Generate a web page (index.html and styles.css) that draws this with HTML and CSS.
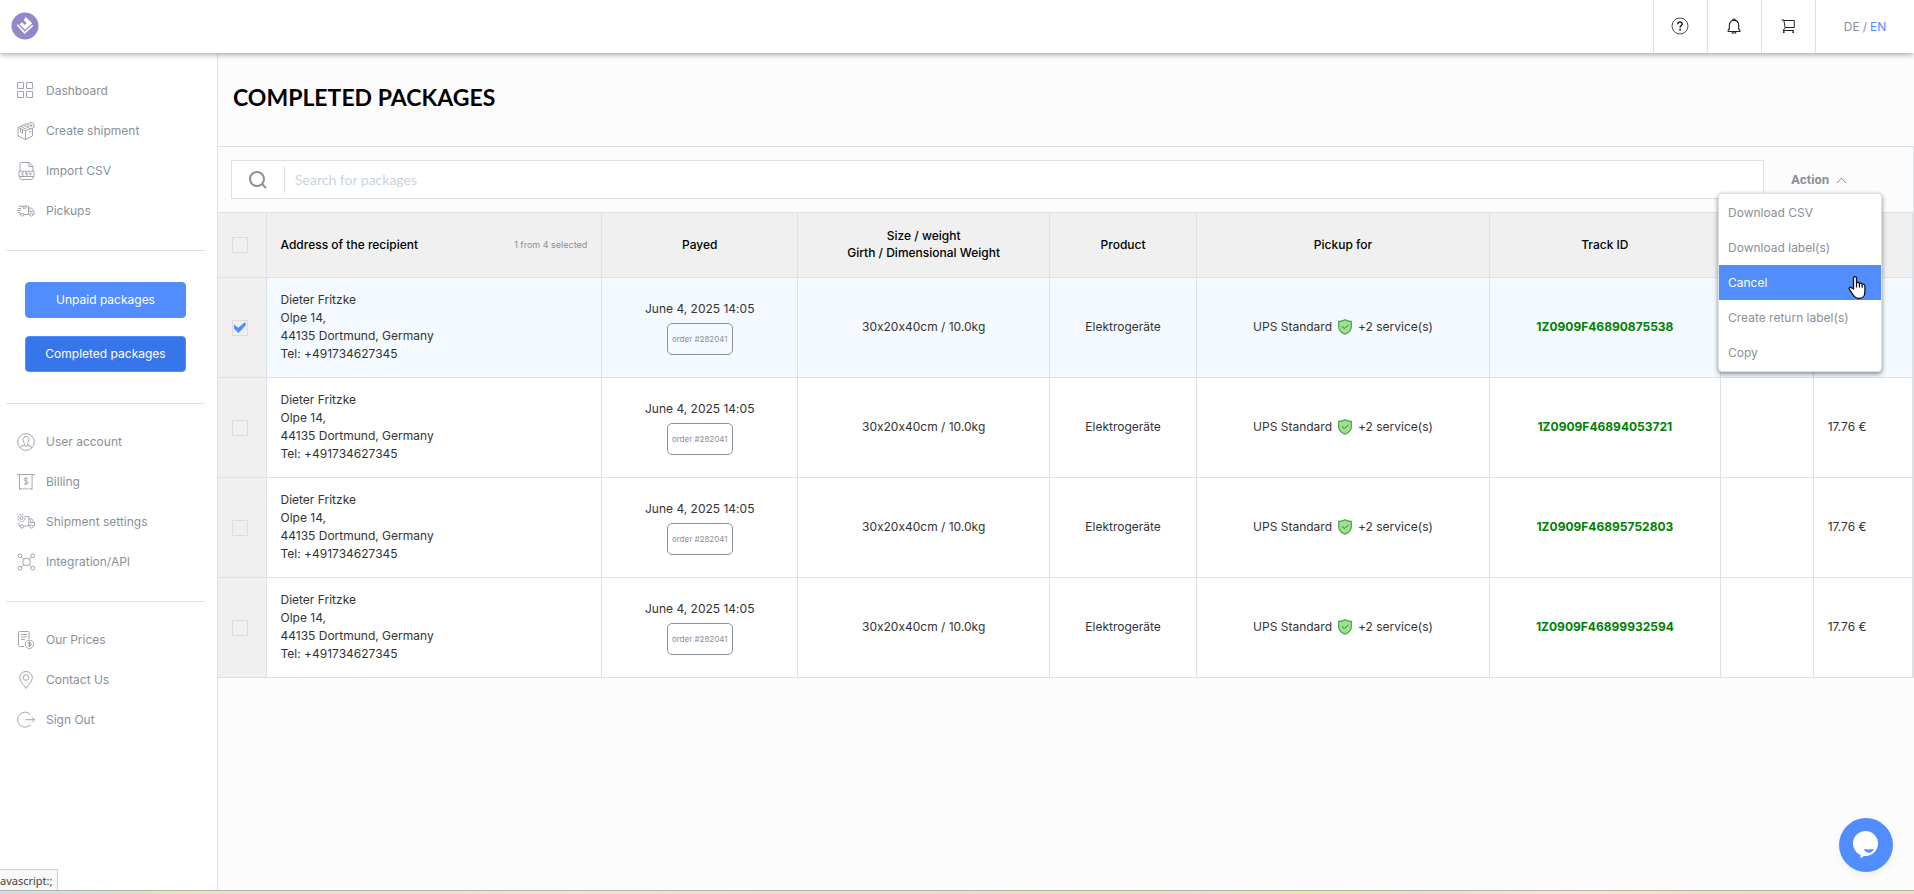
FILE: index.html
```
<!DOCTYPE html>
<html lang="en">
<head>
<meta charset="utf-8">
<meta name="viewport" content="width=device-width, initial-scale=1">
<title>Completed packages</title>
<link rel="stylesheet" href="styles.css">
</head>
<body>
<header class="topbar">
  <a class="logo" href="#" aria-label="Home">
    <svg width="28" height="28" viewBox="0 0 28 28"><circle cx="14" cy="14" r="13.5" fill="#9387c8"/><path d="M14.8 5l6.400 6.200-7.200 6.600-5.400-5.400 2.300-2.200 3 2.700 1.800-1.700-3-3.200z" fill="#fff"/><path d="M6.300 12.800l7.400 8 8-7.400" fill="none" stroke="#fff" stroke-width="1.700"/></svg>
  </a>
  <nav class="tools" aria-label="Tools">
    <button class="tool" aria-label="Help"><svg width="18" height="18" viewBox="0 0 18 18" fill="none" stroke="#222"><circle cx="9" cy="9" r="8" stroke-width=".8"/><path d="M6.900 7.200c0-2.800 4.300-2.700 4.300-.2 0 1.600-2.100 1.600-2.100 3.400" stroke-width="1.500"/><path d="M9.100 11.800v1.600" stroke-width="1.700"/></svg></button>
    <button class="tool" aria-label="Notifications"><svg width="18" height="18" viewBox="0 0 18 18" fill="none" stroke="#222" stroke-width="1.100"><path d="M4.300 12.200V8.600C4.300 5.500 6 3.400 9 3.400s4.700 2.100 4.700 5.200v3.600"/><path d="M4.300 11.800L3.200 13.300v1.200h11.600v-1.200l-1.100-1.500M8 3.300V2.200h2v1.100M7.300 14.800v1.200h3.400v-1.200"/></svg></button>
    <button class="tool" aria-label="Cart"><svg width="18" height="18" viewBox="0 0 18 18" fill="none" stroke="#222" stroke-width="1"><path d="M2.500 3h2.300l1.400 8-2.200 2.500H15M4.800 3.500h10.500v7H6.200"/><path d="M4 15.200h1.600M13.400 15.200H15" stroke-width="1.800"/></svg></button>
    <div class="lang"><a href="#">DE</a><span> / </span><a class="current" href="#">EN</a></div>
  </nav>
</header>

<div class="shell">
<aside class="sidebar">
  <nav class="menu">
    <a href="#"><svg class="ico" viewBox="0 0 18 18"><path d="M.5.5h6v6h-6zM9.500.5h6v6h-6zM.5 9.500h6v6h-6zM9.500 9.500h6v6h-6z"/></svg>Dashboard</a>
    <a href="#"><svg class="ico" viewBox="0 0 18 18"><path d="M1 5.500v8.500l7.500 3.500 7-3.500V7M8.500 8.800v8.500M1 5.500l7.500 3.300 5-2M1 5.500l8-3.500h2M4 4.500l5.500 2.800M3.500 7v3l2 1V8M6.500 3.300l4.500 2M12 10l2-.8"/><circle cx="14" cy="3.600" r="3.200"/><path d="M14 2v3.200M12.400 3.600h3.200"/></svg>Create shipment</a>
    <a href="#"><svg class="ico" viewBox="0 0 18 18"><path d="M3 9V2Q3 .5 4.500.5H12L16 4.500V9M12 .5v4h4M3 14.500v1.500q0 1.500 1.500 1.500h10q1.500 0 1.500-1.500v-1.500M2 9.200h15v5.300H2z"/><path d="M6.800 10.700H5v2.400h1.800M10.300 10.700H8.600v1h1.700v1.400H8.600M12 10.500l1.200 2.600 1.200-2.600"/></svg>Import CSV</a>
    <a href="#"><svg class="ico" viewBox="0 0 18 18"><path d="M2 4.200h9.500v8.300H7M1 6.500h3M0 8.500h4M1 10.500h2v2h.7M11.500 6h3l2.500 3v3.500h-1M11.500 12.500h1M13 7.500v2h3M6 4.200v2h3v-2"/><circle cx="5.300" cy="12.700" r="1.500"/><circle cx="14.300" cy="12.700" r="1.500"/></svg>Pickups</a>
  </nav>
  <hr>
  <div class="buttons">
    <button class="btn">Unpaid packages</button>
    <button class="btn active">Completed packages</button>
  </div>
  <hr>
  <nav class="menu">
    <a href="#"><svg class="ico" viewBox="0 0 18 18"><circle cx="9" cy="9" r="8.300"/><path d="M6 6.500C6 2.500 12 2.500 12 6.500c0 2-.8 3.200-1.500 3.800v1.500l3.500 1.500.5 1.500M7.500 11.800L4 13.300l-.5 1.500M7.500 11.800v-1.500C6.800 9.700 6 8.500 6 6.500M6.500 12.300q2.500 2 5 0"/></svg>User account</a>
    <a href="#"><svg class="ico" viewBox="0 0 18 18"><path d="M.5 2.500v-1h17v1M2.500 1.500v15l1.600-1.200 1.600 1.200 1.600-1.200 1.700 1.200 1.600-1.200 1.600 1.200 1.600-1.200 1.300 1.200v-15M11 6.200q-.5-1.200-2-1.200T7.200 6.500Q7.200 7.800 9 8t2 1.600q0 1.500-2 1.500T7 10M9 4v8"/></svg>Billing</a>
    <a href="#"><svg class="ico" viewBox="0 0 18 18"><circle cx="4.500" cy="5" r="3.600" stroke-dasharray="2 .8"/><circle cx="4.500" cy="5" r="1.600"/><path d="M8.500 3.500h3.300v9.500H7M2 9.500v3.500h1M11.800 6h3l2.700 3.500V13h-1M11.800 13h.7M13.500 7.500v2H17"/><circle cx="5" cy="13.500" r="1.700"/><circle cx="14.500" cy="13.500" r="1.700"/></svg>Shipment settings</a>
    <a href="#"><svg class="ico" viewBox="0 0 18 18"><circle cx="9.500" cy="9" r="3.800"/><circle cx="3" cy="2.700" r="1.900"/><circle cx="15.800" cy="2.700" r="1.900"/><circle cx="3" cy="15.300" r="1.900"/><circle cx="15.800" cy="15.300" r="1.900"/><path d="M4.500 4l2.200 2.200M14.300 4l-2.100 2.200M4.500 14l2.200-2.200M14.300 14l-2.100-2.200"/></svg>Integration/API</a>
  </nav>
  <hr>
  <nav class="menu">
    <a href="#"><svg class="ico" viewBox="0 0 18 18"><path d="M7 15.500H2.500q-1 0-1-1V1.500q0-1 1-1h8.500q1 0 1 1V8M4 3.500h6M4 6h6M4 8.500h4"/><circle cx="12.500" cy="13.300" r="4.200"/><path d="M14 11.800q-3-1.300-3 .3t3 1.300-3 1.500M12.500 10.500v5.600"/></svg>Our Prices</a>
    <a href="#"><svg class="ico" viewBox="0 0 18 18"><path d="M9 17.500C6.500 13.500 2.700 10 2.700 6.500a6.300 6 0 0 1 12.600 0C15.300 10 11.500 13.500 9 17.500z"/><circle cx="9" cy="6.500" r="2.800"/></svg>Contact Us</a>
    <a href="#"><svg class="ico" viewBox="0 0 18 18"><path d="M13.500 3.500A7.500 7.500 0 1 0 13.500 13.800M8.500 8.700h9M15 6.200l2.500 2.500L15 11.200"/></svg>Sign Out</a>
  </nav>
</aside>

<main class="content">
  <h1>COMPLETED PACKAGES</h1>
  <div class="toolbar">
    <label class="search">
      <svg width="20" height="20" viewBox="0 0 20 20" fill="none" stroke="#8a9097" stroke-width="2"><circle cx="9" cy="9" r="7"/><path d="M14 14l4 4"/></svg>
      <input type="text" placeholder="Search for packages" aria-label="Search for packages">
    </label>
    <div class="action">
      <button class="action-toggle" aria-expanded="true">Action<svg width="11" height="8" viewBox="0 0 11 8" fill="none" stroke="#8a9097"><path d="M1 7l4.500-5L10 7"/></svg></button>
      <div class="dropdown">
        <button>Download CSV</button>
        <button>Download label(s)</button>
        <button class="hover">Cancel</button>
        <button>Create return label(s)</button>
        <button>Copy</button>
        <svg class="pointer" width="20" height="26" viewBox="0 0 20 26"><path d="M6.500 14V3.200c0-2.200 3-2.200 3 0V8c.5-1 2.700-.8 2.900.6.700-.9 2.600-.6 2.800.8.800-.7 2.700-.3 2.700 1.600v6c0 3.700-2.300 6.500-6 6.500-3.500 0-4.500-1.500-6-3.800l-3.500-5.400c-1-1.600.8-2.700 2-1.500z" fill="#fff" stroke="#111" stroke-width="1.300"/><path d="M9.500 8v4.500M12.400 9v3.500M15.200 9.700v3" stroke="#111" stroke-width="1.200"/></svg>
      </div>
    </div>
  </div>
  <table class="packages">
    <colgroup><col class="c-check"><col class="c-address"><col class="c-payed"><col class="c-size"><col class="c-product"><col class="c-pickup"><col class="c-track"><col class="c-status"><col class="c-price"></colgroup>
    <thead>
      <tr>
        <th class="check"><input type="checkbox" aria-label="Select all"></th>
        <th><div class="address-head"><span>Address of the recipient</span><small>1 from 4 selected</small></div></th>
        <th>Payed</th><th>Size / weight<br>Girth / Dimensional Weight</th><th>Product</th><th>Pickup for</th><th>Track ID</th><th></th><th></th>
      </tr>
    </thead>
    <tbody>
      <tr class="selected">
        <td class="check"><input type="checkbox" aria-label="Select 1Z0909F46890875538" checked></td>
        <td class="address">Dieter Fritzke<br>Olpe 14,<br>44135 Dortmund, Germany<br>Tel: +491734627345</td>
        <td><div class="payed"><span>June 4, 2025 14:05</span><button class="order">order #282041</button></div></td>
        <td>30x20x40cm / 10.0kg</td><td>Elektrogeräte</td>
        <td><div class="service"><span>UPS Standard</span><svg width="14" height="16" viewBox="0 0 14 16"><path d="M7 .8Q9.500 2.500 13.300 2.300V8c0 3.600-3.300 6-6.300 7.200C4 14 .7 11.600.7 8V2.300Q4.500 2.500 7 .8z" fill="#a5dd91" stroke="#3fa648" stroke-width="1.200"/><path d="M4 7.300l2.300 2.200L10.500 6" fill="none" stroke="#238636"/></svg><span>+2 service(s)</span></div></td>
        <td><a class="track" href="#">1Z0909F46890875538</a></td><td></td><td class="price"></td>
      </tr>
      <tr>
        <td class="check"><input type="checkbox" aria-label="Select 1Z0909F46894053721"></td>
        <td class="address">Dieter Fritzke<br>Olpe 14,<br>44135 Dortmund, Germany<br>Tel: +491734627345</td>
        <td><div class="payed"><span>June 4, 2025 14:05</span><button class="order">order #282041</button></div></td>
        <td>30x20x40cm / 10.0kg</td><td>Elektrogeräte</td>
        <td><div class="service"><span>UPS Standard</span><svg width="14" height="16" viewBox="0 0 14 16"><path d="M7 .8Q9.500 2.500 13.300 2.300V8c0 3.600-3.300 6-6.300 7.200C4 14 .7 11.600.7 8V2.300Q4.500 2.500 7 .8z" fill="#a5dd91" stroke="#3fa648" stroke-width="1.200"/><path d="M4 7.300l2.300 2.200L10.500 6" fill="none" stroke="#238636"/></svg><span>+2 service(s)</span></div></td>
        <td><a class="track" href="#">1Z0909F46894053721</a></td><td></td><td class="price">17.76 €</td>
      </tr>
      <tr>
        <td class="check"><input type="checkbox" aria-label="Select 1Z0909F46895752803"></td>
        <td class="address">Dieter Fritzke<br>Olpe 14,<br>44135 Dortmund, Germany<br>Tel: +491734627345</td>
        <td><div class="payed"><span>June 4, 2025 14:05</span><button class="order">order #282041</button></div></td>
        <td>30x20x40cm / 10.0kg</td><td>Elektrogeräte</td>
        <td><div class="service"><span>UPS Standard</span><svg width="14" height="16" viewBox="0 0 14 16"><path d="M7 .8Q9.500 2.500 13.300 2.300V8c0 3.600-3.300 6-6.300 7.200C4 14 .7 11.600.7 8V2.300Q4.500 2.500 7 .8z" fill="#a5dd91" stroke="#3fa648" stroke-width="1.200"/><path d="M4 7.300l2.300 2.200L10.500 6" fill="none" stroke="#238636"/></svg><span>+2 service(s)</span></div></td>
        <td><a class="track" href="#">1Z0909F46895752803</a></td><td></td><td class="price">17.76 €</td>
      </tr>
      <tr>
        <td class="check"><input type="checkbox" aria-label="Select 1Z0909F46899932594"></td>
        <td class="address">Dieter Fritzke<br>Olpe 14,<br>44135 Dortmund, Germany<br>Tel: +491734627345</td>
        <td><div class="payed"><span>June 4, 2025 14:05</span><button class="order">order #282041</button></div></td>
        <td>30x20x40cm / 10.0kg</td><td>Elektrogeräte</td>
        <td><div class="service"><span>UPS Standard</span><svg width="14" height="16" viewBox="0 0 14 16"><path d="M7 .8Q9.500 2.500 13.300 2.300V8c0 3.600-3.300 6-6.300 7.200C4 14 .7 11.600.7 8V2.300Q4.500 2.500 7 .8z" fill="#a5dd91" stroke="#3fa648" stroke-width="1.200"/><path d="M4 7.300l2.300 2.200L10.500 6" fill="none" stroke="#238636"/></svg><span>+2 service(s)</span></div></td>
        <td><a class="track" href="#">1Z0909F46899932594</a></td><td></td><td class="price">17.76 €</td>
      </tr>
    </tbody>
  </table>
</main>
</div>

<div class="edge"></div>
<div class="status">avascript:;</div>
<button class="chat" aria-label="Open chat"><svg width="54" height="54" viewBox="0 0 54 54"><path d="M26.500 13a12.500 12.500 0 0 1 0 25h-1.200c-1.500.8-2.500 1.400-3.800 2.200V37A12.500 12.500 0 0 1 26.500 13z" fill="#fff"/><path d="M25.500 31.500q4.500 1.200 8.700 0-1.200 2.800-4.400 2.800t-4.300-2.800z" fill="#528dfe" stroke="#528dfe"/></svg></button>
</body>
</html>
```
FILE: styles.css
```
* { box-sizing: border-box; }

body {
  margin: 0;
  min-height: 100vh;
  display: flex;
  flex-direction: column;
  background: #fff;
  color: #333;
  font: 12px/18px Inter, "Liberation Sans", sans-serif;
  font-feature-settings: "calt" 0;
}

button { font: inherit; color: inherit; border: 0; padding: 0; background: none; cursor: pointer; }
a { color: inherit; text-decoration: none; }

.topbar {
  position: relative;
  z-index: 1;
  height: 53px;
  display: flex;
  justify-content: space-between;
  align-items: center;
  background: #fff;
  box-shadow: 0 1px 6px rgba(0, 0, 0, .4);
}
.logo { display: flex; padding: 0 0 2px 11px; }
.tools { display: flex; align-self: stretch; }
.tool {
  width: 54px;
  display: flex;
  align-items: center;
  justify-content: center;
  padding: 0 1px 2px 0;
  border-left: 1px solid #dce0e7;
}
.lang {
  width: 99px;
  display: flex;
  gap: 3px;
  align-items: center;
  justify-content: center;
  border-left: 1px solid #dce0e7;
  color: #8a9097;
}
.lang .current { color: #528dfe; }

.shell { flex: 1; display: flex; }

.sidebar { width: 218px; flex: none; border-right: 1px solid #dce0e7; padding: 18px 12px 0 6px; }
.sidebar hr { height: 1px; margin: 19px 0 18px; border: 0; background: #dce0e7; }
.menu a {
  height: 40px;
  display: flex;
  align-items: center;
  gap: 11px;
  padding-left: 11px;
  color: #8a9097;
}
.ico { width: 18px; height: 18px; fill: none; stroke: #979ca3; stroke-width: .9; }
.buttons { display: flex; flex-direction: column; gap: 18px; padding: 13px 19px 12px; }
.btn { height: 36px; border: 1px solid #528dfe; border-radius: 4px; background: #528dfe; color: #fff; }
.btn.active { background: #3775ea; }

.content { flex: 1; min-width: 0; background: #fcfcfc; }
h1 {
  margin: 0;
  padding: 29px 15px 34px;
  font: 700 23px/30px Lato, sans-serif;
  color: #000;
}

.toolbar {
  display: flex;
  padding: 13px 12px 13px 13px;
  border: 1px solid #dce0e7;
  border-width: 1px 1px 0 0;
}
.search {
  flex: 1;
  height: 39px;
  display: flex;
  align-items: center;
  gap: 16px;
  padding-left: 16px;
  background: #fff;
  border: 1px solid #dce0e7;
}
.search input {
  flex: 1;
  height: 27px;
  padding: 0 10px;
  border: 0;
  border-left: 1px solid #dce0e7;
  outline: 0;
  background: none;
  font: 14px/20px Lato, sans-serif;
}
.search input::placeholder { color: #cbd2db; opacity: 1; }

.action { position: relative; width: 137px; display: flex; padding-left: 27px; }
.action-toggle { display: flex; align-items: center; gap: 7px; font-weight: 700; color: #8a9097; }
.dropdown {
  position: absolute;
  z-index: 2;
  top: 33px;
  right: 19px;
  width: 164px;
  display: flex;
  flex-direction: column;
  padding: 1px 0;
  background: #fff;
  border: 1px solid #dce0e7;
  border-radius: 4px;
  box-shadow: 0 2px 5px rgba(0, 0, 0, .45);
}
.dropdown button { height: 35px; padding: 0 9px; text-align: left; color: #8a9097; }
.dropdown .hover { background: #528dfe; color: #fff; }
.pointer { position: absolute; right: 14px; top: 81px; }

.packages { width: 100%; table-layout: fixed; border-collapse: collapse; background: #fff; }
.c-check { width: 48px; }
.c-address { width: 19.81%; }
.c-payed { width: 11.56%; }
.c-size { width: 14.86%; }
.c-product { width: 8.67%; }
.c-pickup { width: 17.28%; }
.c-track { width: 13.62%; }
.c-status { width: 5.48%; }

.packages th, .packages td { padding: 0 14px; border: 1px solid #dce0e7; border-left: 0; text-align: center; }
.packages tr > :last-child { border-right-width: 2px; }
.packages th { height: 65px; padding-bottom: 2px; background: #f0f0f0; color: #000; font-weight: 500; line-height: 17px; }
.packages td { height: 100px; padding-bottom: 1px; }
.packages .selected td { background: #f4faff; }
.packages .check, .packages .selected .check { padding-bottom: 0; background: #f0f0f0; text-align: left; }
.packages .address { text-align: left; }
.packages .price { text-align: left; }
.address-head { display: flex; justify-content: space-between; }
.address-head small { font-size: 9px; font-weight: 400; color: #8a9097; }

.check input {
  appearance: none;
  display: grid;
  place-items: center;
  width: 16px;
  height: 16px;
  margin: 0;
  border: 1px solid #dcdcdc;
  border-radius: 1px;
}
.check input:checked::before {
  content: "";
  width: 12px;
  height: 11px;
  background: #528dfe;
  clip-path: polygon(0 22%, 36% 52%, 92% 0, 100% 28%, 38% 100%, 0 62%);
}

.payed { display: flex; flex-direction: column; align-items: center; gap: 5px; }
.order { height: 32px; padding: 0 4px; border: 1px solid #8a9097; border-radius: 5px; font-size: 8px; color: #8a9097; }
.service { display: flex; justify-content: center; align-items: center; gap: 6px; }
.track { font-weight: 700; color: #008000; }

.edge {
  height: 4px;
  border-top: 1px solid #b5b4ab;
  background: linear-gradient(90deg, #cfdfe6 0, #d3e0da 4%, #e3e4b8 9%, #eedfd2 14%, #f3e1d2 30%, #eedbd0 50%, #e9e2ae 57%, #ecdcd0 63%, #ebea95 68%, #ecdccf 74%, #fae6d2 82%, #ecdfb4 92%, #f0dfc4 100%);
}
.status {
  position: fixed;
  left: 0;
  bottom: 4px;
  width: 58px;
  height: 21px;
  border: 1px solid #d0d0d0;
  border-width: 1px 1px 0 0;
  background: #f8f8f8;
  color: #444;
  font: 11px/22px "Noto Sans", sans-serif;
}
.chat { position: fixed; right: 21px; bottom: 22px; width: 54px; height: 54px; border-radius: 50%; background: #528dfe; box-shadow: 0 3px 8px rgba(0, 0, 0, .06); }
```
